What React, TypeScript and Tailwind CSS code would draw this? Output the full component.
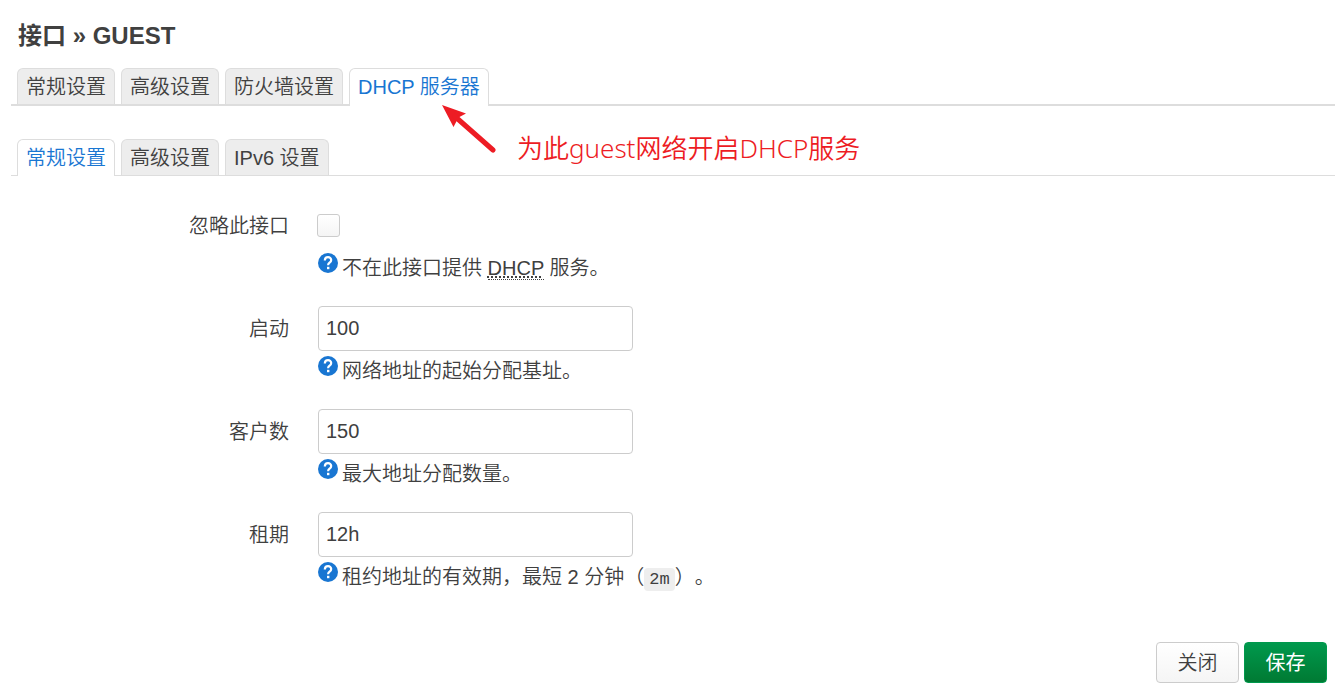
import React, { useState } from "react";

const mainTabs = ["常规设置", "高级设置", "防火墙设置", "DHCP 服务器"];
const dhcpTabs = ["常规设置", "高级设置", "IPv6 设置"];

const HelpIcon = () => (
  <svg viewBox="0 0 20 20" className="mt-[2px] h-5 w-5 shrink-0" aria-hidden="true">
    <circle cx="10" cy="10" r="10" fill="#1976d2" />
    <path
      d="M6.8 7.500C6.9 5.300 8.200 4.200 10 4.200c1.900 0 3.200 1.100 3.200 2.800 0 1.300-.7 2-1.600 2.700-.9.700-1.500 1.200-1.500 2.500"
      fill="none"
      stroke="#fff"
      strokeWidth="2.200"
    />
    <rect x="9" y="13.800" width="2.400" height="2.400" fill="#fff" />
  </svg>
);

const Tabs = ({
  items,
  initial,
  thick,
  label,
}: {
  items: string[];
  initial: number;
  thick?: boolean;
  label: string;
}) => {
  const [active, setActive] = useState(initial);

  return (
    <div
      role="tablist"
      aria-label={label}
      className={`flex gap-[6px] border-[#ddd] pl-[6px] ${thick ? "border-b-2" : "border-b"}`}
    >
      {items.map((item, i) => (
        <button
          key={item}
          type="button"
          role="tab"
          aria-selected={i === active}
          onClick={() => setActive(i)}
          className={`shrink-0 rounded-t-md border border-b-0 border-[#ddd] px-2 pt-[2px] leading-[33px] ${
            i === active
              ? `bg-white text-[#1976d2] ${thick ? "-mb-[2px] pb-[2px]" : "-mb-px pb-px"}`
              : "bg-[#ededed]"
          }`}
        >
          {item}
        </button>
      ))}
    </div>
  );
};

const Field = ({
  id,
  label,
  value,
  help,
}: {
  id: string;
  label: string;
  value?: string;
  help: React.ReactNode;
}) => (
  <div className="mb-5 flex">
    <label htmlFor={id} className="w-[278px] shrink-0 text-right leading-[47px]">
      {label}
    </label>
    <div className="ml-[29px]">
      {value === undefined ? (
        <div className="flex h-[45px] items-center">
          <input
            id={id}
            type="checkbox"
            className="-ml-px h-[23px] w-[23px] appearance-none rounded-[3px] border border-[#ccc] bg-linear-to-b from-white to-[#f5f5f5] checked:bg-[#1976d2]"
          />
        </div>
      ) : (
        <input
          id={id}
          type="text"
          defaultValue={value}
          className="block h-[45px] w-[315px] rounded border border-[#ccc] bg-white px-[7px]"
        />
      )}
      <div className="flex h-[38px] gap-1 pt-[3px]">
        <HelpIcon />
        <p className="whitespace-nowrap leading-[34px] [text-spacing-trim:space-all]">{help}</p>
      </div>
    </div>
  </div>
);

const App = () => {
  return (
    <main className="relative bg-white pt-5 pr-2 pl-[11px] font-['Liberation_Sans','Noto_Sans_CJK_SC',sans-serif] text-[20px] font-[350] text-[#404040]">
      <h4 className="mb-4 pl-[7px] text-2xl font-bold">接口 » GUEST</h4>

      <Tabs items={mainTabs} initial={3} thick label="接口" />
      <div className="h-[33px]" />
      <Tabs items={dhcpTabs} initial={0} label="DHCP" />

      <form className="pt-[27px]" onSubmit={(e) => e.preventDefault()}>
        <Field
          id="ignore"
          label="忽略此接口"
          help={
            <>
              不在此接口提供{" "}
              <abbr
                title="Dynamic Host Configuration Protocol"
                className="border-b border-dotted border-[#404040] underline decoration-dotted"
              >
                DHCP
              </abbr>{" "}
              服务。
            </>
          }
        />
        <Field id="start" label="启动" value="100" help="网络地址的起始分配基址。" />
        <Field id="limit" label="客户数" value="150" help="最大地址分配数量。" />
        <Field
          id="leasetime"
          label="租期"
          value="12h"
          help={
            <>
              租约地址的有效期，最短 2 分钟（
              <code className="rounded bg-[#eee] px-[5px] py-[2px] font-['Liberation_Mono',monospace] text-[17px]">
                2m
              </code>
              ）。
            </>
          }
        />

        <div className="mt-[47px] flex justify-end gap-[5px] pr-2">
          <button
            type="button"
            className="h-[41px] w-[83px] rounded border border-[#ccc] bg-linear-to-b from-white to-[#f5f5f5]"
          >
            关闭
          </button>
          <button
            type="submit"
            className="h-[41px] w-[83px] rounded border border-[#00994d] bg-linear-to-b from-[#00994d] to-[#007a33] font-normal text-white"
          >
            保存
          </button>
        </div>
      </form>

      {/* callout over the tabs */}
      <svg
        viewBox="0 0 54 48"
        className="absolute top-[105px] left-[442px] h-12 w-[54px]"
        aria-hidden="true"
      >
        <path d="M0 0 24 8.500 16.500 12.500 11.500 22Z" fill="#ed1c24" />
        <path d="M13 11.500 51 45" stroke="#ed1c24" strokeWidth="5" strokeLinecap="round" />
      </svg>
      <p className="absolute top-[130px] left-[517px] font-['Noto_Sans','Noto_Sans_CJK_SC',sans-serif] text-[26px] leading-9 font-[350] whitespace-nowrap text-[#ed1c24]">
        为此guest网络开启DHCP服务
      </p>
    </main>
  );
};

export default App;
